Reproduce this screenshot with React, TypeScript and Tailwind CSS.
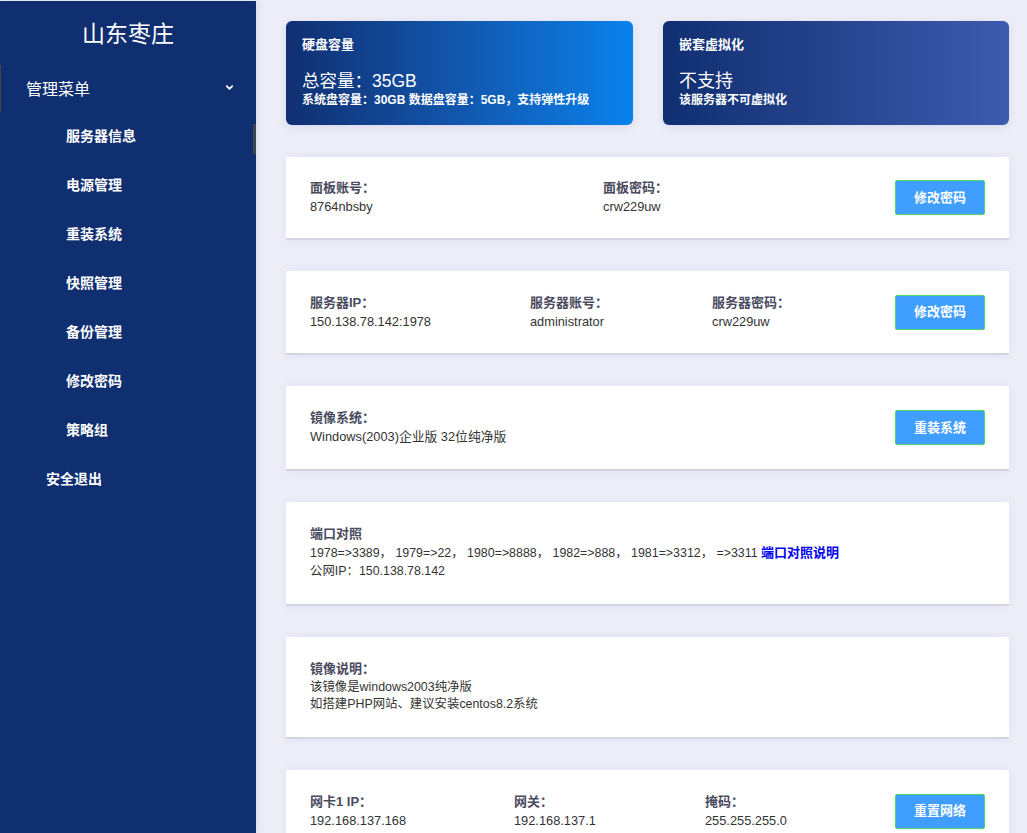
import { ChevronDown } from 'lucide-react';

const fontStack = 'font-["Liberation_Sans","Noto_Sans_CJK_SC",sans-serif]';

const menuItems = ['服务器信息', '电源管理', '重装系统', '快照管理', '备份管理', '修改密码', '策略组'];

const Field = ({ label, value, className }: { label: string; value: string; className?: string }) => (
  <div className={className}>
    <p className="text-[13px] leading-[18px] font-bold text-[#4a4a5e]">{label}</p>
    <p className="mt-[1px] text-[12.8px] leading-[18px] text-[#333]">{value}</p>
  </div>
);

const ActionButton = ({ label }: { label: string }) => (
  <button className="h-[35px] w-[90px] shrink-0 rounded-[2px] border border-[#4cd964] bg-[#409eff] text-[13px] font-bold text-white">
    {label}
  </button>
);

const Panel = ({ className, children }: { className: string; children: React.ReactNode }) => (
  <div className={`bg-white pl-[24px] pr-[24px] border-b-2 border-[#d5d5e2] shadow-[0_0_10px_rgba(200,200,225,0.35)] ${className}`}>
    {children}
  </div>
);

export default function App() {
  return (
    <div className={`flex h-[833px] w-[1027px] overflow-hidden bg-[#eeeef9] ${fontStack}`}>
      {/* Sidebar */}
      <aside className="relative mt-[1px] w-[256px] shrink-0 bg-[#102f71] text-white shadow-[2px_0_6px_rgba(190,190,215,0.4)]">
        <div className="absolute left-0 top-[64px] h-[47px] w-[1px] bg-[#444]" />
        <div className="absolute right-0 top-[123px] h-[30px] w-[3px] bg-[#3d4450]" />
        <h1 className="pt-[17px] text-center text-[23px] leading-[32px] font-normal">山东枣庄</h1>
        <div className="mt-[24px] flex h-[32px] items-center justify-between pl-[26px] pr-[21px]">
          <span className="text-[16px] leading-[32px]">管理菜单</span>
          <ChevronDown size={11} strokeWidth={4} className="mb-[5px]" />
        </div>
        <ul className="mt-[6px]">
          {menuItems.map((item) => (
            <li key={item} className="h-[49px] pl-[66px] text-[14px] leading-[49px] font-bold">
              {item}
            </li>
          ))}
          <li className="h-[49px] pl-[46px] text-[14px] leading-[49px] font-bold">安全退出</li>
        </ul>
      </aside>

      {/* Main */}
      <main className="flex-1 pl-[30px] pr-[18px] pt-[21px]">
        <div className="flex gap-[30px]">
          <div className="h-[104px] w-[347px] rounded-[6px] bg-gradient-to-r from-[#102f71] to-[#0782ed] pl-[16px] pt-[14px] text-white shadow-[0_2px_8px_rgba(180,180,215,0.4)]">
            <p className="text-[13px] leading-[20px] font-bold">硬盘容量</p>
            <p className="mt-[15px] text-[17.5px] leading-[22px]">总容量：35GB</p>
            <p className="text-[12px] leading-[16px] font-bold">系统盘容量：30GB 数据盘容量：5GB，支持弹性升级</p>
          </div>
          <div className="h-[104px] w-[346px] rounded-[6px] bg-gradient-to-r from-[#102f71] to-[#3c5bae] pl-[16px] pt-[14px] text-white shadow-[0_2px_8px_rgba(180,180,215,0.4)]">
            <p className="text-[13px] leading-[20px] font-bold">嵌套虚拟化</p>
            <p className="mt-[15px] text-[18px] leading-[22px]">不支持</p>
            <p className="text-[12px] leading-[16px] font-bold">该服务器不可虚拟化</p>
          </div>
        </div>

        <Panel className="mt-[32px] flex h-[83px] items-center">
          <Field label="面板账号：" value="8764nbsby" className="w-[293px]" />
          <Field label="面板密码：" value="crw229uw" className="flex-1" />
          <ActionButton label="修改密码" />
        </Panel>

        <Panel className="mt-[31px] flex h-[84px] items-center">
          <Field label="服务器IP：" value="150.138.78.142:1978" className="w-[220px]" />
          <Field label="服务器账号：" value="administrator" className="w-[182px]" />
          <Field label="服务器密码：" value="crw229uw" className="flex-1" />
          <ActionButton label="修改密码" />
        </Panel>

        <Panel className="mt-[31px] flex h-[85px] items-center">
          <Field label="镜像系统：" value="Windows(2003)企业版 32位纯净版" className="flex-1" />
          <ActionButton label="重装系统" />
        </Panel>

        <Panel className="mt-[31px] h-[104px] pt-[23px]">
          <p className="text-[13px] leading-[18px] font-bold text-[#4a4a5e]">端口对照</p>
          <p className="mt-[1px] text-[12.4px] leading-[18px] text-[#333]">
            1978=&gt;3389， 1979=&gt;22， 1980=&gt;8888， 1982=&gt;888， 1981=&gt;3312， =&gt;3311{' '}
            <span className="text-[13px] font-bold text-[#0000ee]">端口对照说明</span>
          </p>
          <p className="text-[12.4px] leading-[18px] text-[#333]">公网IP：150.138.78.142</p>
        </Panel>

        <Panel className="mt-[31px] h-[102px] pt-[23px]">
          <p className="text-[13px] leading-[18px] font-bold text-[#4a4a5e]">镜像说明：</p>
          <p className="mt-[1px] text-[12.4px] leading-[17px] text-[#333]">该镜像是windows2003纯净版</p>
          <p className="text-[12.4px] leading-[17px] text-[#333]">如搭建PHP网站、建议安装centos8.2系统</p>
        </Panel>

        <Panel className="mt-[31px] flex h-[84px] items-center">
          <Field label="网卡1 IP：" value="192.168.137.168" className="w-[204px]" />
          <Field label="网关：" value="192.168.137.1" className="w-[191px]" />
          <Field label="掩码：" value="255.255.255.0" className="flex-1" />
          <ActionButton label="重置网络" />
        </Panel>
      </main>
    </div>
  );
}
